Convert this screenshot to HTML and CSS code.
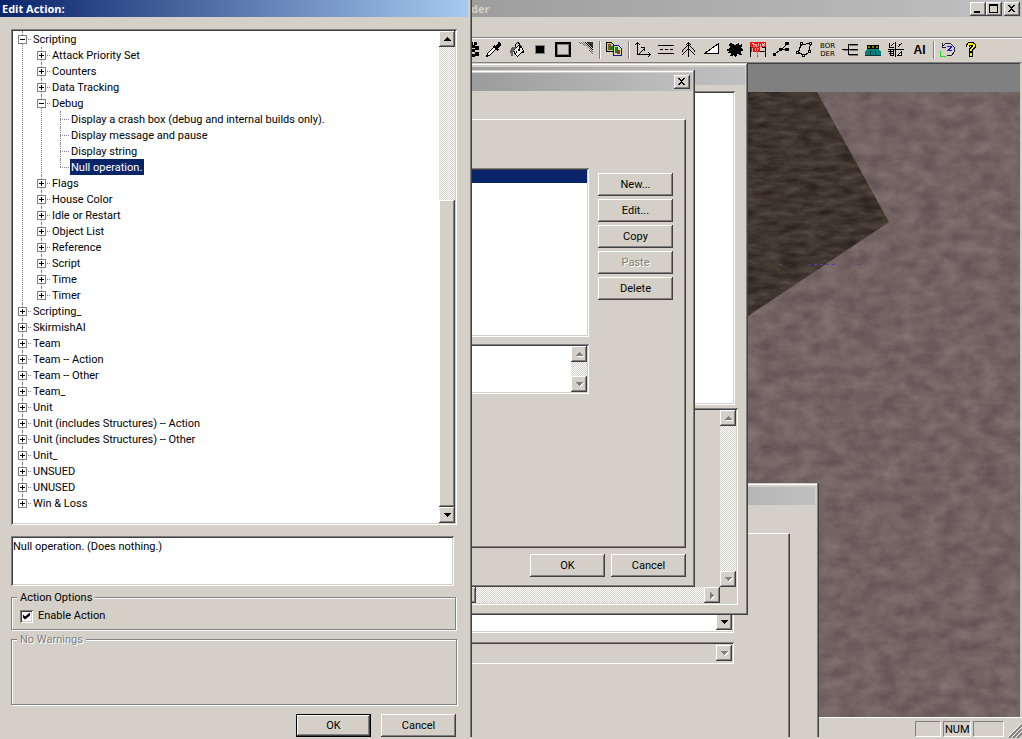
FILE: index.html
```html
<!DOCTYPE html>
<html lang="en">
<head>
<meta charset="utf-8">
<title>Edit Action</title>
<link rel="stylesheet" href="styles.css">
</head>
<body>
<div class="desktop">

<main class="app">
  <header class="caption caption-idle app-caption">
    <span class="app-name">der</span>
    <span class="caption-buttons">
      <button class="cap-btn" aria-label="Minimize"><svg width="12" height="10"><path d="M2 7h6v2h-6z"/></svg></button>
      <button class="cap-btn" aria-label="Restore"><svg width="12" height="10"><path d="M1 0h9v9h-9zM2 2v6h7v-6z" fill-rule="evenodd"/></svg></button>
      <button class="cap-btn cap-close" aria-label="Close"><svg width="12" height="10"><use href="#cross"/></svg></button>
    </span>
  </header>
  <div class="menubar"></div>
  <div class="toolbar" role="toolbar" aria-label="Tools">
    <button class="tool" aria-label="Pattern"><svg width="17" height="16"><path d="M8 0h3v3h-3zM12 0h3v3h-3zM9 3h4v3h-4zM13 4h4v4h-4zM10 7h3v3h-3zM13 10h4v4h-4zM10 12h3v3h-3z"/></svg></button>
    <button class="tool" aria-label="Eyedropper"><svg width="17" height="16"><path d="M12 0h3v1h1v3h-1v1h-1v1h-1v1h1v1h-1v1h-1v-1h-1v-1h-1v-1h-1v-1h-1v-1h1v-1h1v1h1v-1h1v-1h1v-1h1z"/><path d="M8.500 5.500L2.500 11.500V13.500H4.500L10.500 7.500" fill="#fff" stroke="#000"/><path d="M1 13h2v2h-2z"/></svg></button>
    <button class="tool" aria-label="Fill"><svg width="17" height="16"><path d="M5.500 8.500L11.500 2.500L15.500 8.500L9.500 14.500L7.500 12.500z" fill="#eee" stroke="#000"/><path d="M11.500 8V1.500L9.500 .5L7.500 2.500V7" fill="none" stroke="#000"/><path d="M4 5h4v2h-2v3h-1v4h-2v-3h-1v-3h1v-2h1z" fill="#606060"/><path d="M10 7h2v2h-2zM8 9h1v2h-1zM12 4h2v2h-2zM14 9h2v2h-2z"/></svg></button>
    <button class="tool" aria-label="Small brush"><svg width="17" height="16"><path d="M4 3h10v9h-10z" fill="#808080"/><path d="M5 4h8v7h-8z"/></svg></button>
    <button class="tool" aria-label="Large brush"><svg width="17" height="16"><path d="M2 1h14v13h-14z" fill="none" stroke="#000" stroke-width="2"/><path d="M3.500 2.500h11v10h-11z" fill="none" stroke="#808080"/></svg></button>
    <button class="tool" aria-label="Feather"><svg width="17" height="16"><defs><pattern id="dots" width="2" height="2" patternUnits="userSpaceOnUse"><path d="M0 0h1v1h-1zM1 1h1v1h-1z"/></pattern></defs><path d="M1 0H16V14L12 10V7L8 4L2 1z" fill="url(#dots)" opacity=".45"/><path d="M6 0H16V10L12 5L9 3z" fill="url(#dots)"/><path d="M11 0H16V6z" fill="#333"/></svg></button>
    <span class="sep"></span>
    <button class="tool" aria-label="Copy map"><svg width="17" height="16"><path d="M.5 .5h5l3 3v6h-8z" fill="#c8c898" stroke="#000"/><path d="M2 2h3v6h-3z" fill="#8a5a20"/><path d="M4 4h3v4h-3z" fill="#188018"/><path d="M7.500 3.500h5l3 3v7h-8z" fill="#d8d8b0" stroke="#1010a0"/><path d="M9 5h3v6h-3z" fill="#188018"/><path d="M11 8h3v4h-3z" fill="#a03020"/></svg></button>
    <span class="sep"></span>
    <button class="tool" aria-label="Axes"><svg width="17" height="16"><path d="M2 0h1v12h13v1h-14zM1 1h3v1h-3zM0 2h1v1h-1zM4 2h1v1h-1zM14 11h1v3h-1zM13 10h1v1h-1zM13 14h1v1h-1zM4 11h1v-1h1v-1h1v-1h1v-1h1v1h-1v1h-1v1h-1v1h-1v1h-1zM6 5h4v4h-1v-3h-3z"/></svg></button>
    <button class="tool" aria-label="Road"><svg width="17" height="16"><path d="M0 3h16v1h-16zM2 7h3v1h-3zM7 7h3v1h-3zM12 7h3v1h-3zM0 11h16v1h-16z"/></svg></button>
    <button class="tool" aria-label="Grove"><svg width="17" height="16"><path d="M7.500 0v15M4.500 3.500l3-3l3 3M1.500 8.500l6-6l6 6M.5 13.500l7-7l7 7M1.500 8v2M13.500 8v2" fill="none" stroke="#000"/></svg></button>
    <button class="tool" aria-label="Ramp"><svg width="17" height="16"><path d="M.5 11.500L14.500 1.500V11.500z" fill="#fff" stroke="#000"/></svg></button>
    <button class="tool" aria-label="Scorch"><svg width="17" height="16"><path d="M3 1h2v1h2v1h2v-1h2v-1h1v2h2v-1h1v3h-1v1h1v1h1v2h-2v3h1v1h-3v-1h-2v2h-1v1h-1v-1h-1v-1h-1v1h-3v-1h1v-2h-3v-1h1v-1h-2v-2h2v-1h1v-2h-1z"/></svg></button>
    <button class="tool" aria-label="Build list"><svg width="17" height="16"><path d="M.5 0v15M15.500 0v15M0 9.500h16M12 5.500h4" fill="none" stroke="#000"/><path d="M0 0h16v5h-16zM1 5h9v5h-9z" fill="#e01818"/><path d="M2 1h1v3h2v-2h-2M6 2v2h2v-3M10 2v3M12 1v3M14 1v3h-1v-2M2 6v3h1M5 6v3M7 6h2M7 7v2" fill="none" stroke="#fff" stroke-width=".6"/><path d="M7 11h1v1h-1zM7 13h1v2h-1z" fill="#e01818"/></svg></button>
    <button class="tool" aria-label="Waypoint"><svg width="17" height="16"><path d="M1.500 12.500L7.500 7.500H12M8.500 7.500L14.500 1.500" fill="none" stroke="#000"/><path d="M0 11h3v3h-3zM6 6h3v3h-3zM12 6h4v3h-4zM12 0h4v3h-4z"/></svg></button>
    <button class="tool" aria-label="Polygon"><svg width="17" height="16"><path d="M5.500 2.500L14.500 1.500L12.500 10.500L8.500 13.500L2.500 10.500L3.500 6.500z" fill="none" stroke="#000"/><path d="M4 0h3v3h-3zM13 0h3v3h-3zM12 8h3v3h-3zM6 12h3v3h-3zM0 9h3v3h-3z"/><path d="M5 1h1v1h-1zM14 1h1v1h-1zM13 9h1v1h-1zM7 13h1v1h-1zM1 10h1v1h-1z" fill="#fff"/></svg></button>
    <button class="tool tool-words" aria-label="Border"><span>BOR</span><span>DER</span></button>
    <button class="tool" aria-label="Group"><svg width="17" height="16"><path d="M0 7h6v1h-6zM6 2h10v1h-10zM6 2h1v11h-1zM6 12h10v1h-10zM6 7h10v1h-10z"/><path d="M2 8.500h4M8 3.500h8M8 8.500h8M7 13.500h9" stroke="#777" fill="none"/></svg></button>
    <button class="tool" aria-label="Teams"><svg width="17" height="16"><path d="M0 14V10L2 7H14L16 10V14z" fill="#008080"/><path d="M5.500 9v4M10.500 9v4M0 13.500h16" stroke="#003838"/><g fill="#808000" stroke="#000"><circle cx="4" cy="5" r="2"/><circle cx="8" cy="5" r="2"/><circle cx="12" cy="5" r="2"/></g></svg></button>
    <button class="tool" aria-label="Grid"><svg width="17" height="16"><path d="M7.500 0v15M0 7.500h16M1 1v4h5M3 4l3-3M10 5l4-4M11 2h1M0 9h6M1 11h5M2 13h4M2.500 8v6M5.500 8v6" fill="none" stroke="#000"/><path d="M9.500 13.500l4-4v4z" fill="#fff" stroke="#000"/></svg></button>
    <button class="tool tool-ai" aria-label="Scripts">AI</button>
    <span class="sep"></span>
    <button class="tool" aria-label="Refresh"><svg width="17" height="16"><path d="M2.500 4.500L5.500 1.500H10.500L14.500 5.500V9.500L11.500 13.500H6.500M2 1v4h4" fill="none" stroke="#202040"/><path d="M7 4h5v1l-3 3h3v1h-5v-1l3-3h-3z" fill="#1818d8"/><path d="M.5 9v5h5" fill="none" stroke="#20e020"/></svg></button>
    <button class="tool" aria-label="Help"><svg width="17" height="16"><path d="M5 0h6v1h1v1h1v4h-1v1h-1v1h-1v2h-4v-4h1v-1h1v-1h-1v1h-4v-3h1v-1h1zM6 10h4v5h-4z"/><path d="M5 1h5v1h2v3h-1v1h-1v1h-1v2h-2v-2h1v-1h1v-1h1v-2h-4v2h-2v-2h1zM7 11h2v3h-2z" fill="#f0f020"/></svg></button>
  </div>
  <section class="client">
    <svg class="terrain" role="img" aria-label="Terrain view">
      <defs>
        <filter id="rock" x="0" y="0" width="100%" height="100%" color-interpolation-filters="sRGB">
          <feTurbulence type="fractalNoise" baseFrequency=".05 .08" numOctaves="6" seed="4"/>
          <feColorMatrix values=".17 0 0 0 .365  .17 0 0 0 .3  .16 0 0 0 .305  0 0 0 0 1"/>
        </filter>
        <filter id="soil" x="0" y="0" width="100%" height="100%" color-interpolation-filters="sRGB">
          <feTurbulence type="fractalNoise" baseFrequency=".05 .16" numOctaves="5" seed="9"/>
          <feColorMatrix values=".24 0 0 0 .13  .22 0 0 0 .1  .2 0 0 0 .08  0 0 0 0 1"/>
        </filter>
        <clipPath id="patch"><path d="M600 0H817L889 130L748 224L600 322z"/></clipPath>
      </defs>
      <rect width="100%" height="100%" filter="url(#rock)"/>
      <g clip-path="url(#patch)"><rect width="900" height="330" filter="url(#soil)"/></g>
      <path d="M779 172.500h3M808 172.500h28M857 172.500h3" stroke="#5a3f9a" stroke-dasharray="3 3"/>
    </svg>
  </section>
  <footer class="status">
    <span class="pane"></span><span class="pane">NUM</span><span class="pane pane-wide"></span>
    <svg class="grip" width="14" height="14"><path d="M1 14L14 1M5 14L14 5M9 14L14 9" stroke="#808080" stroke-width="2"/><path d="M0 13L13 0M4 13L14 3M8 13L14 7" stroke="#fff"/></svg>
  </footer>
</main>

<section class="window win-map" aria-label="Properties">
  <header class="caption caption-idle"></header>
  <div class="map-panel">
    <div class="combo"><select aria-label="Script"></select><span class="combo-arrow"><svg class="arw" width="7" height="4"><use href="#down"/></svg></span></div>
    <div class="combo combo-off"><select aria-label="Parameter" disabled></select><span class="combo-arrow"><svg class="arw arw-off" width="7" height="4"><use href="#down"/></svg></span></div>
  </div>
</section>

<section class="window win-scripts" aria-label="Scripts">
  <header class="caption caption-idle"></header>
  <div class="scripts-body">
    <div class="sunken scripts-list"></div>
    <div class="sunken scripts-view">
      <div class="vbar"><button class="bar-btn" aria-label="Scroll up"><svg class="arw arw-off" width="7" height="4"><use href="#up"/></svg></button><span class="track"></span><button class="bar-btn" aria-label="Scroll down"><svg class="arw arw-off" width="7" height="4"><use href="#down"/></svg></button></div>
      <div class="hbar"><span class="thumb h-thumb"></span><span class="track"></span><button class="bar-btn" aria-label="Scroll right"><svg class="arw arw-off" width="4" height="7"><path d="M0 0h1v1h1v1h1v1h1v1h-1v1h-1v1h-1v1h-1z"/></svg></button></div>
    </div>
  </div>
</section>

<section class="window win-script" aria-label="Script">
  <header class="caption caption-idle"><span class="caption-buttons"><button class="cap-btn" aria-label="Close"><svg width="12" height="10"><use href="#cross"/></svg></button></span></header>
  <div class="script-body">
    <div class="sheet">
      <div class="sheet-lists">
        <div class="sunken actions"><div class="selected-row"></div></div>
        <div class="sunken comment">
          <div class="comment-text"></div>
          <div class="vbar"><button class="bar-btn" aria-label="Scroll up"><svg class="arw arw-off" width="7" height="4"><use href="#up"/></svg></button><span class="track"></span><button class="bar-btn" aria-label="Scroll down"><svg class="arw arw-off" width="7" height="4"><use href="#down"/></svg></button></div>
        </div>
      </div>
      <div class="sheet-buttons">
        <button class="btn">New...</button>
        <button class="btn">Edit...</button>
        <button class="btn">Copy</button>
        <button class="btn" disabled>Paste</button>
        <button class="btn">Delete</button>
      </div>
    </div>
    <div class="sheet-footer"><button class="btn">OK</button><button class="btn">Cancel</button></div>
  </div>
</section>

<section class="window win-action" role="dialog" aria-label="Edit Action">
  <header class="caption caption-active">Edit Action:</header>
  <div class="action-body">
    <div class="sunken tree-box">
      <ul class="tree">
        <li><button class="twist" aria-label="Collapse"></button><span class="node">Scripting</span>
          <ul>
            <li><button class="twist plus" aria-label="Expand"></button><span class="node">Attack Priority Set</span></li>
            <li><button class="twist plus" aria-label="Expand"></button><span class="node">Counters</span></li>
            <li><button class="twist plus" aria-label="Expand"></button><span class="node">Data Tracking</span></li>
            <li><button class="twist" aria-label="Collapse"></button><span class="node">Debug</span>
              <ul>
                <li class="leaf"><span class="node">Display a crash box (debug and internal builds only).</span></li>
                <li class="leaf"><span class="node">Display message and pause</span></li>
                <li class="leaf"><span class="node">Display string</span></li>
                <li class="leaf"><span class="node chosen">Null operation.</span></li>
              </ul>
            </li>
            <li><button class="twist plus" aria-label="Expand"></button><span class="node">Flags</span></li>
            <li><button class="twist plus" aria-label="Expand"></button><span class="node">House Color</span></li>
            <li><button class="twist plus" aria-label="Expand"></button><span class="node">Idle or Restart</span></li>
            <li><button class="twist plus" aria-label="Expand"></button><span class="node">Object List</span></li>
            <li><button class="twist plus" aria-label="Expand"></button><span class="node">Reference</span></li>
            <li><button class="twist plus" aria-label="Expand"></button><span class="node">Script</span></li>
            <li><button class="twist plus" aria-label="Expand"></button><span class="node">Time</span></li>
            <li><button class="twist plus" aria-label="Expand"></button><span class="node">Timer</span></li>
          </ul>
        </li>
        <li><button class="twist plus" aria-label="Expand"></button><span class="node">Scripting_</span></li>
        <li><button class="twist plus" aria-label="Expand"></button><span class="node">SkirmishAI</span></li>
        <li><button class="twist plus" aria-label="Expand"></button><span class="node">Team</span></li>
        <li><button class="twist plus" aria-label="Expand"></button><span class="node">Team -- Action</span></li>
        <li><button class="twist plus" aria-label="Expand"></button><span class="node">Team -- Other</span></li>
        <li><button class="twist plus" aria-label="Expand"></button><span class="node">Team_</span></li>
        <li><button class="twist plus" aria-label="Expand"></button><span class="node">Unit</span></li>
        <li><button class="twist plus" aria-label="Expand"></button><span class="node">Unit (includes Structures) -- Action</span></li>
        <li><button class="twist plus" aria-label="Expand"></button><span class="node">Unit (includes Structures) -- Other</span></li>
        <li><button class="twist plus" aria-label="Expand"></button><span class="node">Unit_</span></li>
        <li><button class="twist plus" aria-label="Expand"></button><span class="node">UNSUED</span></li>
        <li><button class="twist plus" aria-label="Expand"></button><span class="node">UNUSED</span></li>
        <li><button class="twist plus" aria-label="Expand"></button><span class="node">Win &amp; Loss</span></li>
      </ul>
      <div class="vbar"><button class="bar-btn" aria-label="Scroll up"><svg class="arw" width="7" height="4"><use href="#up"/></svg></button><span class="track"></span><span class="thumb v-thumb"></span><button class="bar-btn" aria-label="Scroll down"><svg class="arw" width="7" height="4"><use href="#down"/></svg></button></div>
    </div>
    <textarea class="sunken summary" aria-label="Action text">Null operation. (Does nothing.)</textarea>
    <fieldset class="group group-options">
      <legend>Action Options</legend>
      <label class="check"><input type="checkbox" checked>Enable Action</label>
    </fieldset>
    <fieldset class="group group-warnings" disabled>
      <legend>No Warnings</legend>
    </fieldset>
    <div class="action-footer"><button class="btn btn-default">OK</button><button class="btn">Cancel</button></div>
  </div>
</section>

</div>
<svg class="symbols" width="0" height="0">
  <symbol id="up"><path d="M3 0h1v1h1v1h1v1h1v1h-7v-1h1v-1h1v-1h1z"/></symbol>
  <symbol id="down"><path d="M0 0h7v1h-1v1h-1v1h-1v1h-1v-1h-1v-1h-1v-1h-1z"/></symbol>
  <symbol id="cross"><path d="M2 1h2v1h1v1h1v-1h1v-1h2v1h-1v1h-1v1h-1v1h1v1h1v1h1v1h-2v-1h-1v-1h-1v1h-1v1h-2v-1h1v-1h1v-1h1v-1h-1v-1h-1v-1h-1z"/></symbol>
</svg>
</body>
</html>
```
FILE: styles.css
```css
:root {
  --face: #d4d0c8;
  --shade: #808080;
  --dark: #404040;
  --navy: #0a246a;
  --dither: repeating-conic-gradient(#fff 0 25%, #d4d0c8 0 50%) 0 0 / 2px 2px;
}

* { box-sizing: border-box; }

body {
  margin: 0;
  background: var(--face);
  font: 11px/16px Roboto, "Liberation Sans", sans-serif;
  color: #000;
}

button, select, textarea, input { font: inherit; color: inherit; }
button { padding: 0; border: 0; background: var(--face); }
svg { display: block; shape-rendering: crispEdges; }
.symbols { position: absolute; }

.desktop {
  position: relative;
  height: 100vh;
  overflow: hidden;
}

/* shared window parts */
.caption {
  display: flex;
  align-items: center;
  justify-content: space-between;
  height: 18px;
  padding: 0 2px;
  font: bold 11px/16px "Open Sans", sans-serif;
}
.caption-idle { background: linear-gradient(90deg, #808080, #c0c0c0); color: var(--face); }
.caption-active { background: linear-gradient(90deg, #0a246a, #a6caf0); color: #fff; }
.caption-buttons { display: flex; margin-left: auto; }

.cap-btn {
  display: grid;
  place-items: center;
  width: 16px;
  height: 14px;
}
.cap-close { margin-left: 2px; }

.cap-btn, .btn, .bar-btn, .thumb, .combo-arrow {
  background: var(--face);
  box-shadow: inset -1px -1px var(--dark), inset 1px 1px #fff, inset -2px -2px var(--shade);
}

.btn { width: 75px; height: 23px; }
.btn:disabled { color: var(--shade); text-shadow: 1px 1px #fff; }
.btn-default { border: 1px solid #000; }

.sunken {
  padding: 2px;
  background: #fff;
  box-shadow: inset 1px 1px var(--shade), inset -1px -1px #fff, inset 2px 2px var(--dark), inset -2px -2px var(--face);
}

.window {
  position: absolute;
  padding: 3px;
  background: var(--face);
  box-shadow: inset -1px -1px var(--dark), inset 1px 1px var(--face), inset -2px -2px var(--shade), inset 2px 2px #fff;
}

/* scroll bars */
.vbar { display: flex; flex-direction: column; width: 16px; }
.hbar { display: flex; height: 16px; }
.track { flex: 1; background: var(--dither); }
.bar-btn, .combo-arrow {
  display: grid;
  place-items: center;
  width: 16px;
  height: 16px;
  flex: none;
}
.arw-off { fill: var(--shade); filter: drop-shadow(1px 1px 0 #fff); }

/* application frame */
.app { display: flex; flex-direction: column; height: 100%; }
.app-caption { height: 17px; padding-left: 471px; }
.menubar { height: 21px; border-bottom: 1px solid var(--shade); }
.toolbar {
  display: flex;
  align-items: center;
  height: 25px;
  padding: 0 0 2px 459px;
  border-top: 1px solid #fff;
  border-bottom: 1px solid var(--shade);
}
.tool { display: grid; place-items: center; width: 23px; height: 22px; flex: none; }
.tool-words {
  align-content: center;
  font: 7px/8px "DejaVu Sans", sans-serif;
}
.tool-ai { font: bold 12px/16px "Liberation Sans", sans-serif; }
.sep {
  width: 2px;
  height: 18px;
  margin: 0 2px;
  border-left: 1px solid var(--shade);
  border-right: 1px solid #fff;
}
.client {
  display: flex;
  flex: 1;
  min-height: 0;
  margin-right: 2px;
  padding-top: 28px;
  background: var(--shade);
  border-top: 1px solid var(--dark);
}
.terrain { width: 100%; height: 100%; }
.status {
  display: flex;
  justify-content: flex-end;
  gap: 2px;
  height: 22px;
  padding: 3px 0 2px;
  border-top: 1px solid #fff;
}
.pane {
  width: 26px;
  padding-left: 1px;
  border: 1px solid;
  border-color: var(--shade) #fff #fff var(--shade);
}
.pane:nth-child(2) { width: 28px; }
.pane-wide { width: 31px; }
.grip { margin: 3px 0 0 2px; shape-rendering: auto; }

/* map properties window */
.win-map {
  left: 400px;
  top: 483px;
  bottom: 2px;
  width: 419px;
  padding: 4px 4px 0;
  overflow: hidden;
  box-shadow: inset -1px 0 var(--dark), inset -2px 0 var(--shade), inset 0 1px var(--face), inset 0 2px #fff;
}
.map-panel {
  height: 100%;
  margin: 28px 25px 0 0;
  padding: 77px 55px 0 0;
  border-top: 1px solid #fff;
  border-right: 1px solid var(--dark);
  box-shadow: inset -1px 0 var(--shade);
}
.combo {
  display: flex;
  height: 22px;
  margin-bottom: 9px;
  padding: 3px 2px;
  background: #fff;
  box-shadow: inset 1px 1px var(--shade), inset -1px -1px #fff, inset 2px 2px var(--dark), inset -2px -2px var(--face);
}
.combo-off { background: var(--face); }
.combo select { flex: 1; min-width: 0; appearance: none; border: 0; background: none; }

/* script list window */
.win-scripts { left: 200px; top: 63px; width: 548px; padding-top: 4px; }
.scripts-body { padding: 6px 7px 7px; }
.scripts-list { height: 314px; margin: 0 3px 3px 0; }
.scripts-view {
  display: grid;
  grid-template: 1fr 16px / 1fr 16px;
  height: 197px;
  background: var(--face);
}
.scripts-view .vbar { grid-column: 2; }
.scripts-view .hbar { grid-row: 2; grid-column: 1; }
.h-thumb { width: 264px; }

/* script window */
.win-script { left: 300px; top: 70px; width: 395px; }
.script-body { padding: 28px 6px 7px; }
.sheet {
  display: flex;
  gap: 9px;
  padding: 48px 12px 153px;
  border: 1px solid;
  border-color: #fff var(--dark) var(--dark) #fff;
  box-shadow: inset -1px -1px var(--shade);
}
.sheet-lists { flex: 1; display: flex; flex-direction: column; gap: 7px; }
.actions { height: 169px; }
.selected-row { height: 13px; background: var(--navy); }
.comment { display: flex; height: 50px; }
.comment-text { flex: 1; }
.sheet-buttons { display: flex; flex-direction: column; gap: 3px; padding-top: 5px; }
.sheet-footer { display: flex; justify-content: flex-end; gap: 6px; padding-top: 6px; }

/* edit action dialog */
.win-action {
  left: 0;
  top: 0;
  bottom: 2px;
  width: 472px;
  padding: 0 4px 0 0;
  box-shadow: inset -1px 0 var(--dark), inset -2px 0 var(--shade);
}
.win-action > .caption { height: 17px; }
.action-body { display: flex; flex-direction: column; padding: 12px 11px 0; }
.tree-box { display: flex; height: 496px; }
.v-thumb { height: 307px; }

.tree, .tree ul { margin: 0; padding: 0; list-style: none; }
.tree { flex: 1; padding-left: 5px; overflow: hidden; }
.tree ul { padding-left: 19px; }
.tree li { position: relative; }
.tree li::before, .tree li::after { content: ""; position: absolute; }
.tree li::before { left: 4px; top: 0; bottom: 0; border-left: 1px dotted var(--shade); }
.tree li::after { left: 4px; top: 8px; width: 9px; border-top: 1px dotted var(--shade); }
.tree li:last-child::before { bottom: auto; height: 8px; }
.node { display: inline-block; height: 16px; margin-left: 14px; padding: 0 2px 0 1px; line-height: 18px; vertical-align: top; white-space: nowrap; }
.twist + .node { margin-left: 5px; }
.chosen { background: var(--navy); color: #fff; }
.twist {
  position: relative;
  z-index: 1;
  width: 9px;
  height: 9px;
  margin-top: 4px;
  vertical-align: top;
  border: 1px solid var(--shade);
  background: linear-gradient(#000, #000) center / 5px 1px no-repeat #fff;
}
.plus {
  background:
    linear-gradient(#000, #000) center / 5px 1px no-repeat,
    linear-gradient(#000, #000) center / 1px 5px no-repeat #fff;
}

.summary {
  display: block;
  height: 50px;
  margin: 11px 3px 0 0;
  padding-top: 3px;
  border: 0;
  resize: none;
  outline: 0;
  line-height: 16px;
}
.group {
  min-width: 0;
  margin: 0;
  padding: 0 8px;
  border: 1px solid var(--shade);
  box-shadow: 1px 1px #fff, inset 1px 1px #fff;
}
.group legend { height: 16px; margin-left: -3px; padding: 0 3px; background: var(--face); line-height: 18px; }
.group-options { height: 41px; margin: 3px 1px 0 0; }
.group-warnings { height: 74px; margin-top: 1px; }
.group-warnings legend { color: var(--shade); text-shadow: 1px 1px #fff; }
.check { display: flex; align-items: center; gap: 5px; height: 22px; line-height: 18px; }
.check input {
  appearance: none;
  width: 13px;
  height: 13px;
  margin: 0;
  background: #fff;
  box-shadow: inset 1px 1px var(--shade), inset -1px -1px #fff, inset 2px 2px var(--dark), inset -2px -2px var(--face);
  display: grid;
  place-items: center;
}
.check input:checked::before {
  content: "";
  width: 7px;
  height: 7px;
  background: #000;
  clip-path: polygon(0 29%, 29% 57%, 100% 0, 100% 43%, 29% 100%, 0 71%);
}
.action-footer { display: flex; justify-content: flex-end; gap: 10px; padding: 9px 1px 0 0; }
```
